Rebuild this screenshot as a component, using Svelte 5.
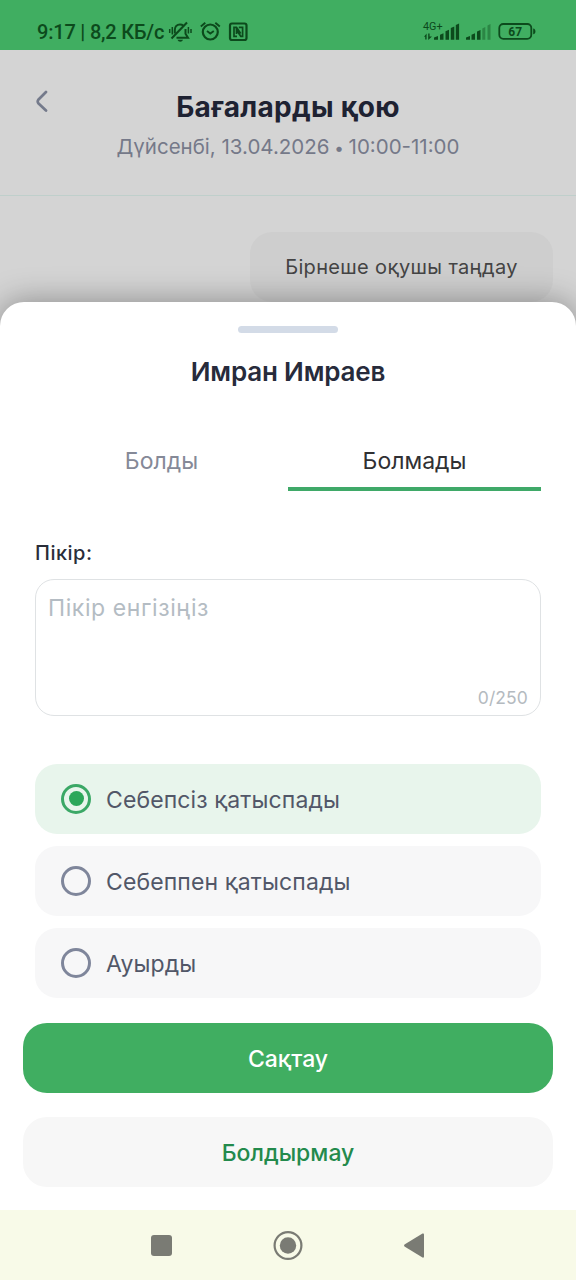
<script>
  let tab = $state('absent')
  let comment = $state('')
  let reason = $state('unexcused')

  const limit = 250
  const tabs = [
    { id: 'present', label: 'Болды' },
    { id: 'absent', label: 'Болмады' },
  ]
  const reasons = [
    { id: 'unexcused', label: 'Себепсіз қатыспады' },
    { id: 'excused', label: 'Себеппен қатыспады' },
    { id: 'sick', label: 'Ауырды' },
  ]
</script>

<div class="screen">
  <div class="status">
    <span class="clock">9:17 | 8,2 КБ/с</span>
    <svg class="status-left" width="82" height="24" viewBox="168 20 82 24" fill="none" stroke="currentColor" stroke-width="1.9">
      <path d="M174.800 33.500v-3.500c0-3.200 2.200-5.500 5.200-5.500 1.500 0 2.500.4 3.500 1.200M185.500 29v4.800l2.500 3.900h-11.500" stroke-width="2" />
      <path d="M171.500 38.500l15.500-16" stroke-width="2.100" />
      <path d="M177.500 39.800h5.500c-.8 2.500-4.700 2.500-5.500 0z" fill="currentColor" stroke="none" />
      <path d="M169.700 29v4M172.300 27v7.500M188.400 27v6.500M191 29v4" stroke-width="1.500" />
      <circle cx="210.300" cy="32" r="7.500" stroke-width="2.200" />
      <path d="M200.800 26.500l4.500-3.700M219.800 26.500l-4.500-3.700M207 31l3.300 2.500 3.500-2.500" />
      <rect x="230" y="23.500" width="16.500" height="16.500" rx="2" stroke-width="2.200" />
      <path d="M237 36.300h-3v-9h2.500l4.200 6.200M238.800 27.300h3.800v9h-1.800l-4.300-6.200v4" stroke-width="1.700" />
    </svg>
    <svg class="status-right" width="118" height="24" viewBox="422 20 118 24" fill="currentColor">
      <text x="423" y="30.300" font-size="10.800">4G+</text>
      <path d="M424 36.800l2.600-3.300v6h-1.400v-2.700zM428.200 33.500h1.400v3h2.400l-3.800 3.500z" />
      <path d="M434 39.800v-2.300l4-1.500v3.800zM440 39.800v-5l3.500-1.500v6.500zM445.500 39.800v-8.500l3.500-1.500v10zM450.800 39.800v-11.800l3.500-1.500v13.300zM455.800 39.800v-14.800l3.300-1.500v16.300z" />
      <path d="M466 39.800v-2.300l4-1.500v3.800zM471.500 39.800v-5l3.500-1.500v6.500zM477 39.800v-8.300l3.500-1.500v9.800z" />
      <path d="M482.300 39.800v-11.300l3-1.500v12.800zM487.500 39.800v-14.300l3-1.500v15.800z" opacity=".4" />
      <rect x="499.300" y="24" width="32" height="14.800" rx="4" fill="none" stroke="currentColor" stroke-width="1.800" />
      <path d="M533.200 28.500c3 .3 3 5.500 0 5.800z" />
      <text class="level" x="508.300" y="36" font-size="12">67</text>
    </svg>
  </div>

  <header class="header">
    <button class="back" aria-label="Артқа">
      <svg width="14" height="22" viewBox="0 0 14 22" fill="none" stroke="currentColor" stroke-width="2.700" stroke-linecap="round" stroke-linejoin="round">
        <path d="M12 2L4.300 9.800q-1.200 1.700 0 3.400l7.700 7.300" />
      </svg>
    </button>
    <div class="heading">
      <h1>Бағаларды қою</h1>
      <p>Дүйсенбі, 13.04.2026 <span class="dot">•</span> 10:00-11:00</p>
    </div>
  </header>

  <main class="page">
    <button class="multi">Бірнеше оқушы таңдау</button>
  </main>

  <section class="sheet">
    <div class="handle"></div>
    <h2>Имран Имраев</h2>

    <div class="tabs">
      {#each tabs as t}
        <button class="tab" class:active={tab === t.id} onclick={() => (tab = t.id)}>{t.label}</button>
      {/each}
    </div>

    <label class="label" for="comment">Пікір:</label>
    <div class="field">
      <textarea id="comment" placeholder="Пікір енгізіңіз" maxlength={limit} bind:value={comment}></textarea>
      <span class="counter">{comment.length}/{limit}</span>
    </div>

    <div class="reasons">
      {#each reasons as r}
        <button class="reason" class:selected={reason === r.id} onclick={() => (reason = r.id)}>
          <span class="radio"></span>
          <span class="reason-label">{r.label}</span>
        </button>
      {/each}
    </div>

    <div class="actions">
      <button class="save">Сақтау</button>
      <button class="cancel">Болдырмау</button>
    </div>
  </section>

  <nav class="nav">
    <svg width="576" height="70" viewBox="0 0 576 70" fill="#7a7b74">
      <rect x="151" y="25" width="21" height="21" rx="3" />
      <circle cx="288" cy="35.500" r="13.400" fill="none" stroke="#7a7b74" stroke-width="2.200" />
      <circle cx="288" cy="35.500" r="8.200" />
      <path d="M404.500 34.500q-1 1 0 2l18 11q1.500.5 1.500-1v-22q0-1.500-1.500-1z" />
    </svg>
  </nav>
</div>

<style>
  :global(body) {
    margin: 0;
  }
  .screen {
    width: 576px;
    height: 1280px;
    display: flex;
    flex-direction: column;
    overflow: hidden;
    background: #d4d4d4;
    font-family: Inter, "Noto Sans", sans-serif;
  }
  button {
    border: 0;
    padding: 0;
    background: none;
    font: inherit;
    color: inherit;
  }
  h1, h2, p {
    margin: 0;
  }

  .status {
    height: 50px;
    flex: none;
    box-sizing: border-box;
    display: flex;
    align-items: flex-start;
    padding: 20px 36px 0 37px;
    background: #40ae61;
    color: #0c4a1c;
    font-family: Roboto, sans-serif;
  }
  .clock {
    width: 131px;
    font-size: 20px;
    line-height: 24px;
    font-weight: 500;
    letter-spacing: -0.2px;
    white-space: nowrap;
  }
  .status-right {
    margin-left: auto;
  }
  .level {
    font-weight: 700;
  }

  .header {
    height: 146px;
    flex: none;
    box-sizing: border-box;
    display: grid;
    grid-template-columns: 40px 1fr 40px;
    padding: 40px 34px 0;
    border-bottom: 1px solid #bfcfcb;
  }
  .back {
    height: 22px;
    text-align: left;
    color: #747a8b;
  }
  .back svg {
    display: block;
  }
  .heading {
    text-align: center;
    white-space: nowrap;
  }
  h1 {
    font-size: 28px;
    line-height: 34px;
    font-weight: 650;
    letter-spacing: 0.3px;
    color: #1e2232;
  }
  .heading p {
    margin-top: 10px;
    font-size: 20.500px;
    line-height: 26px;
    color: #757989;
  }
  .dot {
    margin: 0 -1px;
    font-size: 17px;
    vertical-align: 0;
  }

  .page {
    height: 106px;
    flex: none;
    box-sizing: border-box;
    display: flex;
    justify-content: flex-end;
    padding: 36px 23px 0;
  }
  .multi {
    width: 303px;
    height: 70px;
    border-radius: 22px;
    background: #cecece;
    font-size: 20px;
    letter-spacing: 0.34px;
    color: #444;
    flex: none;
  }

  .sheet {
    position: relative;
    flex: 1;
    box-sizing: border-box;
    display: flex;
    flex-direction: column;
    padding: 24px 35px 0;
    border-radius: 24px 24px 0 0;
    background: #fff;
    box-shadow: 0 0 32px rgba(0, 0, 0, 0.36);
  }
  .handle {
    width: 100px;
    height: 7px;
    align-self: center;
    border-radius: 4px;
    background: #d3dbe7;
  }
  h2 {
    margin-top: 22px;
    font-size: 26px;
    line-height: 34px;
    font-weight: 600;
    letter-spacing: -0.18px;
    text-align: center;
    color: #272b3b;
  }
  .tabs {
    display: flex;
    margin-top: 42px;
  }
  .tab {
    flex: 1;
    height: 60px;
    box-sizing: border-box;
    padding-top: 4px;
    border-bottom: 4px solid transparent;
    font-size: 23px;
    color: #858997;
  }
  .tab.active {
    border-color: #3fa968;
    color: #303033;
  }
  .label {
    margin-top: 49px;
    font-size: 20px;
    line-height: 26px;
    font-weight: 500;
    letter-spacing: 0.5px;
    color: #292d39;
  }
  .field {
    height: 137px;
    box-sizing: border-box;
    margin-top: 13px;
    display: flex;
    flex-direction: column;
    padding: 12px 12px 6px 12px;
    border: 1px solid #dfe2e4;
    border-radius: 19px;
  }
  textarea {
    flex: 1;
    border: 0;
    padding: 0;
    outline: 0;
    resize: none;
    background: none;
    font: inherit;
    font-size: 23px;
    line-height: 32px;
    letter-spacing: 0.6px;
    color: #303033;
  }
  textarea::placeholder {
    color: #b4bcc3;
    opacity: 1;
  }
  .counter {
    align-self: flex-end;
    font-size: 17.500px;
    line-height: 22px;
    letter-spacing: 0.1px;
    color: #b4bac0;
  }
  .reasons {
    display: grid;
    gap: 12px;
    margin-top: 48px;
  }
  .reason {
    height: 70px;
    display: flex;
    align-items: center;
    gap: 15px;
    padding: 0 26px;
    border-radius: 22px;
    background: #f7f7f8;
    font-size: 23px;
    letter-spacing: 0.11px;
    color: #525768;
  }
  .reason.selected {
    background: #e8f5ec;
  }
  .reason-label {
    padding-top: 1px;
  }
  .radio {
    width: 30px;
    height: 30px;
    box-sizing: border-box;
    display: grid;
    place-items: center;
    margin-top: -1px;
    border: 3px solid #7f869b;
    border-radius: 50%;
  }
  .selected .radio {
    border-color: #3ba866;
  }
  .selected .radio::after {
    content: "";
    width: 15px;
    height: 15px;
    border-radius: 50%;
    background: #2ca75a;
  }
  .actions {
    display: grid;
    gap: 24px;
    margin: 25px -12px 0;
  }
  .actions button {
    height: 70px;
    padding-top: 2px;
    border-radius: 24px;
    font-size: 23px;
    font-weight: 500;
  }
  .actions .save {
    background: #40ae61;
    color: #fff;
  }
  .actions .cancel {
    background: #f7f7f7;
    color: #238a4c;
  }

  .nav {
    position: relative;
    height: 70px;
    flex: none;
    background: #f8fae8;
  }
</style>
